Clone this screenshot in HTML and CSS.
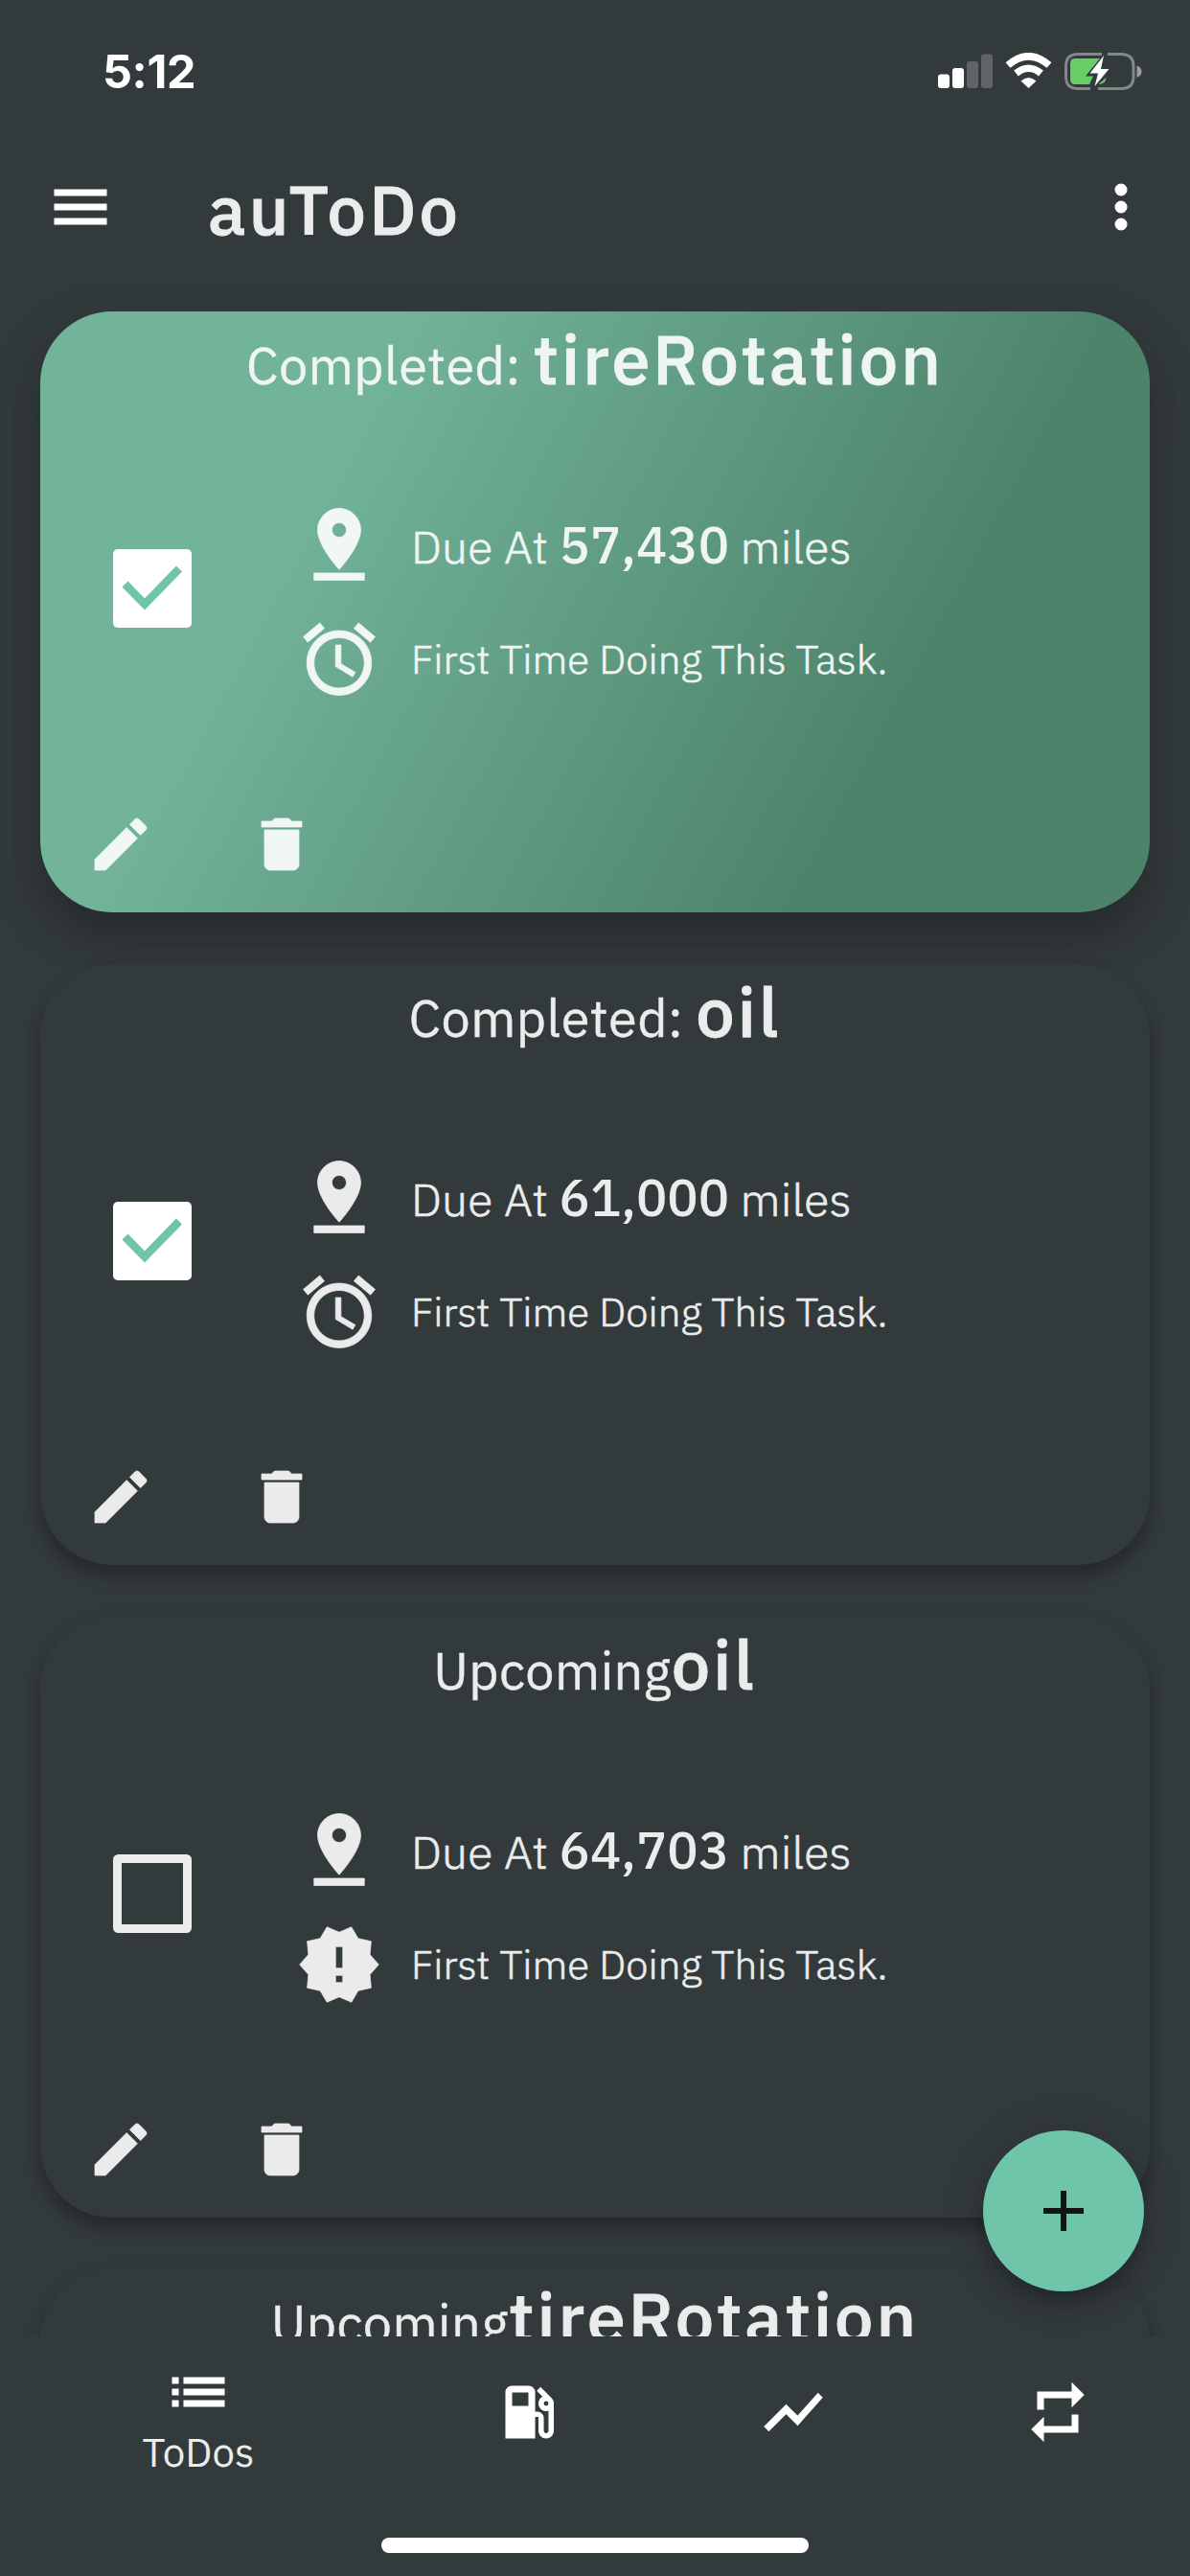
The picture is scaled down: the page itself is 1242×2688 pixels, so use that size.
FILE: index.html
```html
<!DOCTYPE html>
<html lang="en">
<head>
<meta charset="utf-8">
<title>auToDo</title>
<link rel="stylesheet" href="styles.css">
</head>
<body>
<svg class="defs" width="0" height="0" aria-hidden="true">
  <symbol id="pin" viewBox="0 0 24 24"><path d="M18 8c0-3.31-2.69-6-6-6S6 4.69 6 8c0 4.5 6 11 6 11s6-6.5 6-11zm-8 0c0-1.1.9-2 2-2s2 .9 2 2-.89 2-2 2c-1.1 0-2-.9-2-2zM5 20v2h14v-2H5z"/></symbol>
  <symbol id="alarm" viewBox="0 0 24 24"><path d="M22 5.72l-4.6-3.86-1.29 1.53 4.6 3.86L22 5.72zM7.88 3.39L6.6 1.86 2 5.71l1.29 1.53 4.59-3.85zM12.5 8H11v6l4.75 2.85.75-1.23-4-2.37V8zM12 4c-4.97 0-9 4.03-9 9s4.02 9 9 9c4.97 0 9-4.03 9-9s-4.03-9-9-9zm0 16c-3.87 0-7-3.13-7-7s3.13-7 7-7 7 3.13 7 7-3.13 7-7 7z"/></symbol>
  <symbol id="alert" viewBox="0 0 24 24"><path d="M23 12l-2.44-2.78.34-3.68-3.61-.82-1.89-3.18L12 3 8.6 1.54 6.71 4.72l-3.61.81.34 3.68L1 12l2.44 2.78-.34 3.69 3.61.82 1.89 3.18L12 21l3.4 1.46 1.89-3.18 3.61-.82-.34-3.68L23 12zm-10 5h-2v-2h2v2zm0-4h-2V7h2v6z"/></symbol>
  <symbol id="edit" viewBox="0 0 24 24"><path d="M3 17.25V21h3.75L17.81 9.94l-3.75-3.75L3 17.25zM20.71 7.04c.39-.39.39-1.02 0-1.41l-2.34-2.34c-.39-.39-1.02-.39-1.41 0l-1.83 1.83 3.75 3.75 1.83-1.83z"/></symbol>
  <symbol id="trash" viewBox="0 0 24 24"><path d="M6 19c0 1.1.9 2 2 2h8c1.1 0 2-.9 2-2V7H6v12zM19 4h-3.5l-1-1h-5l-1 1H5v2h14V4z"/></symbol>
  <symbol id="box-on" viewBox="0 0 82 82"><rect width="82" height="82" rx="5" fill="#fff"/><path d="M12.5 36.500L33 57.500L69 20.500" fill="none" stroke="#6fc5a9" stroke-width="8.500"/></symbol>
  <symbol id="box-off" viewBox="0 0 82 82"><rect x="4.500" y="4.500" width="73" height="73" rx="1" fill="none" stroke="#ebedec" stroke-width="9"/></symbol>
</svg>

<header class="status">
  <span class="clock">5:12</span>
  <svg class="status-icons" width="214" height="40" viewBox="0 0 214 40">
    <g fill="#fff">
      <rect x="1" y="22.500" width="12" height="14.500" rx="3"/>
      <rect x="16" y="16" width="12" height="21" rx="3"/>
      <g opacity=".22"><rect x="31" y="9" width="12" height="28" rx="3"/><rect x="46" y="1.500" width="12" height="35.500" rx="3"/></g>
    </g>
    <g fill="none" stroke="#fff" stroke-width="7.500"><path d="M74 13Q95.500 -5.500 117 13"/><path d="M82.500 21.500Q95.500 11 108.500 21.500"/></g>
    <path d="M95.500 37L87.500 29.500Q95.500 22.500 103.500 29.500Z" fill="#fff"/>
    <path d="M172 1.500H147Q134.500 1.500 134.500 14V25Q134.500 37.500 147 37.500H160M178 1.500H192Q205 1.500 205 14V25Q205 37.500 192 37.500H168" fill="none" stroke="#828788" stroke-width="3"/>
    <path d="M208.500 13.500Q213.500 15 213.500 19.500Q213.500 24 208.500 26Z" fill="#9a9e9f"/>
    <path d="M144 6H170L155 24.500H163L159 33H144Q139 33 139 28V11Q139 6 144 6ZM168.500 33L176.500 26Q176 33 168.500 33Z" fill="#66ce65"/>
    <path d="M174 3L159.500 21.500H168L164.500 35L179.500 17H171Z" fill="#fff"/>
  </svg>
</header>

<div class="appbar">
  <svg class="icon" viewBox="0 0 24 24"><path d="M3 18h18v-2H3v2zm0-5h18v-2H3v2zm0-7v2h18V6H3z"/></svg>
  <h1 class="app-title">auToDo</h1>
  <svg class="icon" viewBox="0 0 24 24"><path d="M12 8c1.100 0 2-.9 2-2s-.9-2-2-2-2 .9-2 2 .9 2 2 2zm0 2c-1.100 0-2 .9-2 2s.9 2 2 2 2-.9 2-2-.9-2-2-2zm0 6c-1.100 0-2 .9-2 2s.9 2 2 2 2-.9 2-2-.9-2-2-2z"/></svg>
</div>

<main class="list">
  <article class="card card-active">
    <h2 class="card-title"><span class="state">Completed: </span>tireRotation</h2>
    <div class="card-body">
      <svg class="checkbox"><use href="#box-on"/></svg>
      <div class="details">
        <div class="row"><svg class="big-icon"><use href="#pin"/></svg><p class="due">Due At <b>57,430</b> miles</p></div>
        <div class="row"><svg class="big-icon"><use href="#alarm"/></svg><p class="note">First Time Doing This Task.</p></div>
      </div>
    </div>
    <div class="actions"><svg class="icon"><use href="#edit"/></svg><svg class="icon"><use href="#trash"/></svg></div>
  </article>

  <article class="card">
    <h2 class="card-title"><span class="state">Completed: </span>oil</h2>
    <div class="card-body">
      <svg class="checkbox"><use href="#box-on"/></svg>
      <div class="details">
        <div class="row"><svg class="big-icon"><use href="#pin"/></svg><p class="due">Due At <b>61,000</b> miles</p></div>
        <div class="row"><svg class="big-icon"><use href="#alarm"/></svg><p class="note">First Time Doing This Task.</p></div>
      </div>
    </div>
    <div class="actions"><svg class="icon"><use href="#edit"/></svg><svg class="icon"><use href="#trash"/></svg></div>
  </article>

  <article class="card">
    <h2 class="card-title"><span class="state">Upcoming</span>oil</h2>
    <div class="card-body">
      <svg class="checkbox"><use href="#box-off"/></svg>
      <div class="details">
        <div class="row"><svg class="big-icon"><use href="#pin"/></svg><p class="due">Due At <b>64,703</b> miles</p></div>
        <div class="row"><svg class="big-icon"><use href="#alert"/></svg><p class="note">First Time Doing This Task.</p></div>
      </div>
    </div>
    <div class="actions"><svg class="icon"><use href="#edit"/></svg><svg class="icon"><use href="#trash"/></svg></div>
  </article>

  <article class="card">
    <h2 class="card-title"><span class="state">Upcoming</span>tireRotation</h2>
  </article>
</main>

<button class="fab" aria-label="Add"><svg class="icon" viewBox="0 0 24 24"><path d="M19 13h-6v6h-2v-6H5v-2h6V5h2v6h6v2z"/></svg></button>

<footer class="bottom">
  <nav class="tabs">
    <div class="tab tab-selected">
      <svg class="icon" viewBox="0 0 24 24"><path d="M3 13h2v-2H3v2zm0 4h2v-2H3v2zm0-8h2V7H3v2zm4 4h14v-2H7v2zm0 4h14v-2H7v2zM7 7v2h14V7H7z"/></svg>
      <span class="tab-label">ToDos</span>
    </div>
    <div class="tab"><svg class="icon" viewBox="0 0 24 24"><path d="M19.770 7.230l.01-.01-3.720-3.720L15 4.560l2.110 2.110c-.94.36-1.610 1.260-1.610 2.330 0 1.380 1.120 2.500 2.500 2.500.36 0 .69-.08 1-.21v7.210c0 .55-.45 1-1 1s-1-.45-1-1V14c0-1.100-.9-2-2-2h-1V5c0-1.100-.9-2-2-2H6c-1.100 0-2 .9-2 2v16h10v-7.500h1.500v5c0 1.380 1.120 2.500 2.500 2.500s2.500-1.120 2.500-2.500V9c0-.69-.28-1.320-.73-1.770zM12 10H6V5h6v5zm6 0c-.55 0-1-.45-1-1s.45-1 1-1 1 .45 1 1-.45 1-1 1z"/></svg></div>
    <div class="tab"><svg class="icon" viewBox="0 0 24 24"><path d="M3.500 18.490l6-6.010 4 4L22 6.920l-1.410-1.410-7.090 7.970-4-4L2 16.990z"/></svg></div>
    <div class="tab"><svg class="icon" viewBox="0 0 24 24"><path d="M7 7h10v3l4-4-4-4v3H5v6h2V7zm10 10H7v-3l-4 4 4 4v-3h12v-6h-2v4z"/></svg></div>
  </nav>
  <div class="home-indicator"></div>
</footer>
</body>
</html>
```
FILE: styles.css
```css
* { box-sizing: border-box; }

body {
  margin: 0;
  width: 1242px;
  height: 2688px;
  display: flex;
  flex-direction: column;
  overflow: hidden;
  position: relative;
  background: #333a3c;
  color: #ebecec;
  font-family: "IBM Plex Sans", "Open Sans", sans-serif;
}

h1, h2, p { margin: 0; font-weight: 400; }
.defs { display: none; }
.icon { width: 72px; height: 72px; flex: none; fill: #fff; stroke: #fff; stroke-width: .35; }

.status {
  height: 132px;
  display: flex;
  justify-content: space-between;
  padding: 55px 50px 0 107px;
}
.clock {
  font-family: Inter, sans-serif;
  font-size: 48.5px;
  font-weight: 700;
  line-height: 40px;
  color: #fff;
  letter-spacing: -.4px;
}

.appbar {
  height: 168px;
  display: flex;
  align-items: center;
  padding: 0 36px 0 48px;
}
.app-title {
  flex: 1;
  margin-left: 97px;
  padding-top: 4px;
  font-size: 72px;
  font-weight: 500;
  letter-spacing: 3.2px;
  line-height: 100px;
  -webkit-text-stroke: .9px currentColor;
}

.list {
  height: 2138px;
  padding: 25px 42px 0;
  display: flex;
  flex-direction: column;
  gap: 54px;
  overflow: hidden;
}
.card {
  flex: none;
  height: 627px;
  border-radius: 75px;
  background: #333a3c;
  box-shadow: 0 12px 15px rgba(0, 0, 0, .24), 0 3px 20px rgba(0, 0, 0, .05);
}
.card-active {
  color: #eff5f3;
  background: linear-gradient(118.4deg, #72b49a 25%, #4d836b 75%);
  box-shadow: 0 30px 40px -8px rgba(0, 0, 0, .18), 0 20px 60px rgba(0, 0, 0, .13);
}
.card-title {
  height: 96px;
  line-height: 98px;
  font-size: 72px;
  font-weight: 500;
  letter-spacing: 3px;
  text-align: center;
  white-space: pre;
  -webkit-text-stroke: .9px currentColor;
}
.state {
  font-size: 54px;
  font-weight: 400;
  line-height: 1;
  letter-spacing: .45px;
  -webkit-text-stroke: .4px currentColor;
}

.card-body {
  display: flex;
  align-items: flex-start;
  margin-top: 102px;
  padding-left: 76px;
}
.checkbox { width: 82px; height: 82px; margin-top: 50px; }
.details { margin-left: 109px; display: flex; flex-direction: column; gap: 30px; }
.row { height: 90px; display: flex; gap: 30px; white-space: nowrap; }
.big-icon { width: 90px; height: 90px; fill: #fff; stroke: #fff; stroke-width: .2; opacity: .9; }
.due, .note { font-weight: 300; -webkit-text-stroke: .6px currentColor; }
.due { font-size: 48px; line-height: 94px; letter-spacing: .15px; }
.due b { font-size: 54px; font-weight: 500; line-height: 1; letter-spacing: 0; -webkit-text-stroke: 0; }
.note { font-size: 42px; line-height: 90px; letter-spacing: .05px; }

.actions { display: flex; gap: 96px; margin-top: 112px; padding-left: 48px; }
.actions .icon { stroke-width: .25; opacity: .9; }

.fab {
  position: absolute;
  left: 1026px;
  top: 2223px;
  width: 168px;
  height: 168px;
  padding: 0;
  border: 0;
  border-radius: 50%;
  background: #6fc5a9;
  display: flex;
  align-items: center;
  justify-content: center;
  box-shadow: 0 9px 15px -3px rgba(0, 0, 0, .2), 0 18px 30px rgba(0, 0, 0, .14), 0 3px 54px rgba(0, 0, 0, .08);
}
.fab .icon { fill: #101614; stroke: none; }

.bottom {
  height: 250px;
  display: flex;
  flex-direction: column;
  align-items: center;
  background: #333a3c;
}
.tabs { width: 100%; display: flex; height: 158px; }
.tab { width: 276px; display: flex; justify-content: center; align-items: center; }
.tab-selected { width: 414px; flex-direction: column; justify-content: flex-start; padding-top: 22px; }
.tab-label { font-size: 42px; line-height: 54px; }
.home-indicator { width: 446px; height: 16px; margin-top: 52px; border-radius: 8px; background: #fff; }
```
